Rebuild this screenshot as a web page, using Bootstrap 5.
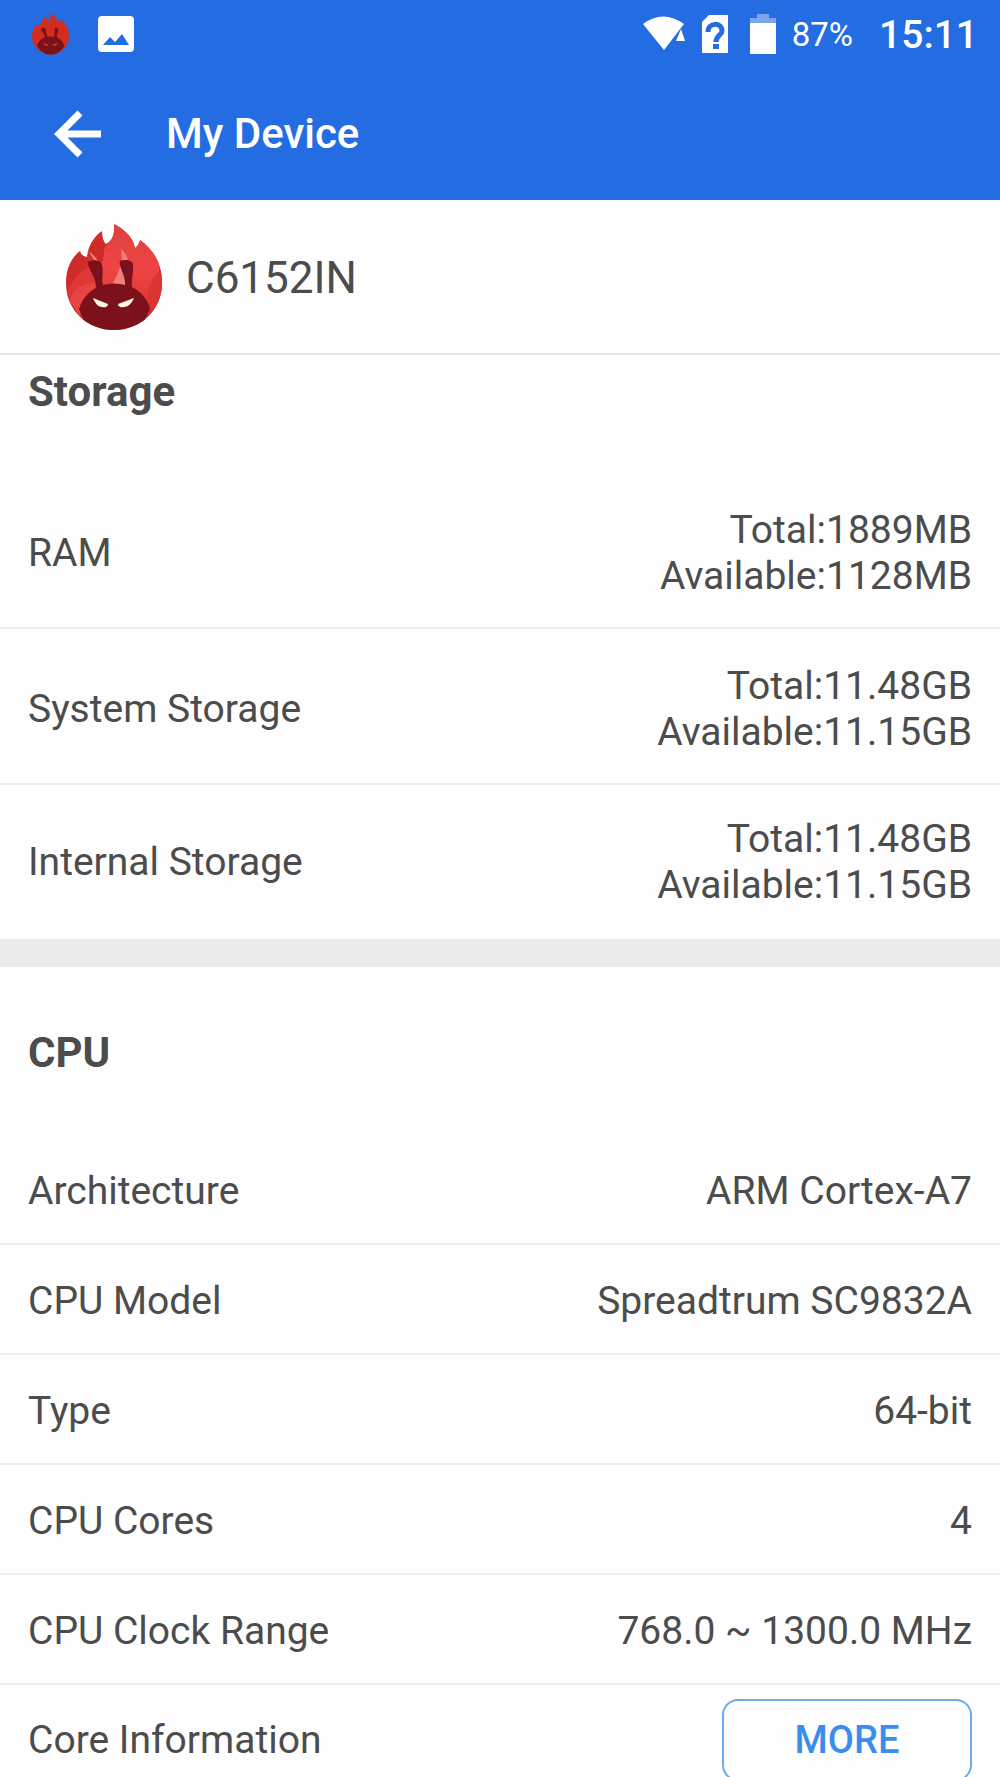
<!DOCTYPE html>
<html lang="en">
<head>
<meta charset="utf-8">
<meta name="viewport" content="width=device-width, initial-scale=1">
<title>My Device</title>
<link href="https://cdn.jsdelivr.net/npm/bootstrap@5.3.0/dist/css/bootstrap.min.css" rel="stylesheet">
<style>
  body { font-family: Roboto, "Noto Sans", sans-serif; font-size: 39px; line-height: 46px; color: #4b4c4b; background: #fefefe; }
  .topbar { background: #246ce1; color: #fff; }
  .status { height: 68px; padding: 0 22px 0 32px; }
  .notices { gap: 28px; }
  .wifi-icon { margin-right: 17px; }
  .sim-icon { margin-right: 22px; }
  .battery-text { font-size: 33px; margin: 0 26px 0 16px; padding-top: 2px; }
  .clock { font-size: 39px; font-weight: 500; padding-top: 2px; }
  .appbar { height: 132px; padding: 0 52px; }
  .back-link { color: #fff; line-height: 1; }
  .screen-title { font-size: 42px; font-weight: 500; margin-left: 64px; }
  .device { height: 155px; padding: 0 66px; border-bottom: 2px solid #e8e8e8; }
  .device-name { font-size: 44px; font-weight: 400; margin-left: 24px; padding-top: 3px; }
  .content { min-height: 0; overflow-y: auto; scrollbar-width: none; }
  .content::-webkit-scrollbar { display: none; }
  .section-title { font-size: 42px; font-weight: 700; padding: 62px 28px 58px; margin: 0; line-height: 48px; }
  .section-title.first { padding: 13px 28px 57px; }
  .spec { min-height: 110px; padding: 4px 28px 0; border-bottom: 2px solid #efefef; }
  .spec.tall { min-height: 156px; padding-top: 6px; }
  .spec.last { border-bottom: 0; padding-top: 0; }
  .spec.tall.last { min-height: 154px; padding-top: 0; }
  .divider { height: 28px; background: #ebebeb; }
  .more-btn { --bs-btn-color: #3a8dee; --bs-btn-border-color: #6ba9f3; --bs-btn-border-radius: 16px; width: 250px; height: 82px; padding: 0; font-size: 38px; font-weight: 500; border-width: 2px; }
</style>
<script src="https://cdn.jsdelivr.net/npm/bootstrap@5.3.0/dist/js/bootstrap.bundle.min.js" defer></script>
</head>
<body class="vh-100 d-flex flex-column overflow-hidden">
<header class="topbar flex-shrink-0">
  <div class="status d-flex align-items-center justify-content-between">
    <div class="notices d-flex align-items-center">
      <svg width="37" height="42" viewBox="0 0 96 108" aria-hidden="true">
        <path d="M48 1C56 5 66 13 69 24Q73 22 74 16C90 29 96 43 96 60C96 88 74 107 48 107S0 88 0 60C0 46 5 35 14 28Q15 33 21 34C22 24 27 14 37 8Q36 17 40 21C47 18 49 9 48 1Z" fill="#d22d20"/>
        <path d="M13 85C18 70 26 66 33 62C34 52 22 47 24 41C27 36 35 37 36 43Q36 52 40 61H57C60 52 57 43 60 38C66 36 72 41 67 48L64 62C70 66 79 70 84 85C66 115 31 115 13 85Z" fill="#7b1218"/>
        <path d="M28 77L44 82Q35 89 28 77ZM68 77L52 82Q61 89 68 77Z" fill="#c43c34"/>
      </svg>
      <svg width="38" height="38" viewBox="0 0 38 38" aria-hidden="true">
        <rect x="1" y="1" width="36" height="36" rx="4" fill="#fff"/>
        <path d="M6 30L13 22L18 27L25 19L32 30Z" fill="#246ce1"/>
      </svg>
    </div>
    <div class="d-flex align-items-center">
      <svg class="wifi-icon" width="42" height="36" viewBox="0 0 42 36" aria-hidden="true">
        <path d="M0 8Q20 -7 41 8L21 34Z" fill="#fff"/>
        <path d="M38 13L42 25H33Z" fill="#fff"/>
      </svg>
      <svg class="sim-icon" width="26" height="38" viewBox="0 0 26 38" aria-hidden="true">
        <path d="M7 0H26V38H0V7Z" fill="#fff"/>
        <path d="M6 17C6 7 20 7 20 16C20 20 14 20 14 27" fill="none" stroke="#246ce1" stroke-width="5"/>
        <path d="M11 29H17V34H11Z" fill="#246ce1"/>
      </svg>
      <svg width="26" height="40" viewBox="0 0 26 40" aria-hidden="true">
        <path d="M7 0H19V4H26V9H0V4H7Z" fill="#7ca6ec"/>
        <path d="M0 9H26V40H0Z" fill="#fff"/>
      </svg>
      <span class="battery-text">87%</span>
      <span class="clock">15:11</span>
    </div>
  </div>
  <nav class="appbar d-flex align-items-center">
    <a class="back-link d-flex" href="#" aria-label="Back">
      <svg width="50" height="48" viewBox="0 0 50 48" aria-hidden="true">
        <path d="M49 24H8M28 3L7 24L28 45" fill="none" stroke="#fff" stroke-width="7"/>
      </svg>
    </a>
    <h1 class="screen-title mb-0">My Device</h1>
  </nav>
</header>
<section class="device d-flex align-items-center flex-shrink-0">
  <svg width="96" height="108" viewBox="0 0 96 108" aria-hidden="true">
    <defs>
      <linearGradient id="flame" x1="0" y1="0" x2="0" y2="1"><stop offset="0" stop-color="#dc4141"/><stop offset=".5" stop-color="#ef4444"/><stop offset="1" stop-color="#d93232"/></linearGradient>
      <clipPath id="outline"><path d="M48 1C56 5 67 13 69 25Q73 22 74 17C90 29 96 43 96 60C96 88 74 107 48 107S0 88 0 60C0 46 5 35 14 28Q15 33 21 34C22 24 27 14 36 8Q36 17 40 21C47 18 49 9 48 1Z"/></clipPath>
    </defs>
    <g clip-path="url(#outline)">
      <path d="M0 0H96V108H0Z" fill="#cf2b29"/>
      <path d="M48 0C62 6 70 17 69 25L75 16C92 28 96 44 92 52C82 67 82 80 84 92H12C3 70 10 60 29 52C32 45 38 40 38 29C38 20 50 20 48 0Z" fill="url(#flame)"/>
      <path d="M0 72C5 58 13 49 25 42L22 33C30 38 33 47 30 60C18 63 10 73 8 84Z" fill="#dd3835"/>
      <path d="M4 78C7 64 18 60 29 60L27 78L13 92Z" fill="#e64543"/>
      <path d="M96 46C82 59 78 70 85 88L96 75Z" fill="#d93533"/>
      <path d="M22 28C28 32 33 37 35 45L30 40ZM55 26C60 30 63 36 62 43L56 37Z" fill="#f47d78"/>
      <path d="M46 62C51 53 52 49 55 42L61 62Z" fill="#f0807d"/>
      <path d="M13 86C17 74 24 68 30 65C30 52 22 48 22 39C27 36 35 37 36 42C38 48 35 54 37 62Q48 59 59 62C60 53 52 43 54 38C59 36 66 37 67 41C68 49 65 57 66 64C74 68 82 76 84 86L74 108H22Z" fill="#7b121b"/>
      <path d="M27 75L42 81Q42 83 40 84C33 85 30 82 27 75ZM68 75L52 81Q52 83 54 84C61 85 65 82 68 75Z" fill="#fff5e8"/>
    </g>
  </svg>
  <h2 class="device-name mb-0">C6152IN</h2>
</section>
<main class="content flex-grow-1">
  <section>
    <h2 class="section-title first">Storage</h2>
    <div class="spec tall d-flex align-items-center justify-content-between"><span>RAM</span><span class="text-end">Total:1889MB<br>Available:1128MB</span></div>
    <div class="spec tall d-flex align-items-center justify-content-between"><span>System Storage</span><span class="text-end">Total:11.48GB<br>Available:11.15GB</span></div>
    <div class="spec tall last d-flex align-items-center justify-content-between"><span>Internal Storage</span><span class="text-end">Total:11.48GB<br>Available:11.15GB</span></div>
  </section>
  <div class="divider"></div>
  <section>
    <h2 class="section-title">CPU</h2>
    <div class="spec d-flex align-items-center justify-content-between"><span>Architecture</span><span>ARM Cortex-A7</span></div>
    <div class="spec d-flex align-items-center justify-content-between"><span>CPU Model</span><span>Spreadtrum SC9832A</span></div>
    <div class="spec d-flex align-items-center justify-content-between"><span>Type</span><span>64-bit</span></div>
    <div class="spec d-flex align-items-center justify-content-between"><span>CPU Cores</span><span>4</span></div>
    <div class="spec d-flex align-items-center justify-content-between"><span>CPU Clock Range</span><span>768.0 ~ 1300.0 MHz</span></div>
    <div class="spec last d-flex align-items-center justify-content-between"><span>Core Information</span><button type="button" class="btn more-btn">MORE</button></div>
  </section>
</main>
</body>
</html>
